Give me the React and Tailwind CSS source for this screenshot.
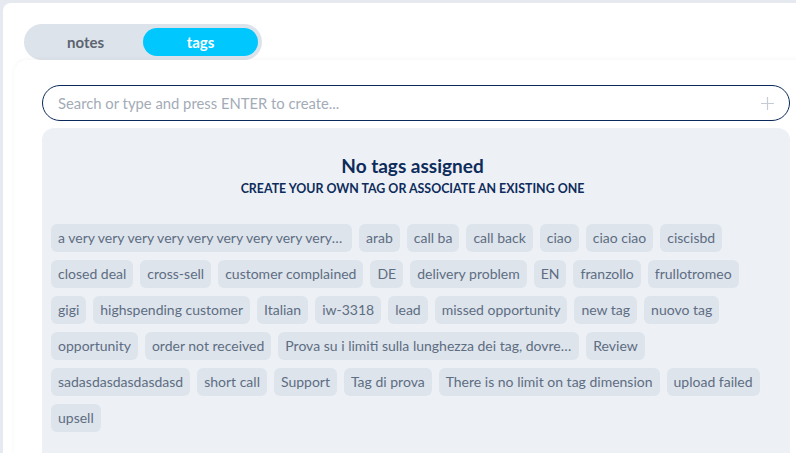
import React, { useState } from 'react';

const tags = [
  'a very very very very very very very very very very very very long tag',
  'arab',
  'call ba',
  'call back',
  'ciao',
  'ciao ciao',
  'ciscisbd',
  'closed deal',
  'cross-sell',
  'customer complained',
  'DE',
  'delivery problem',
  'EN',
  'franzollo',
  'frullotromeo',
  'gigi',
  'highspending customer',
  'Italian',
  'iw-3318',
  'lead',
  'missed opportunity',
  'new tag',
  'nuovo tag',
  'opportunity',
  'order not received',
  'Prova su i limiti sulla lunghezza dei tag, dovrebbe essere troncato',
  'Review',
  'sadasdasdasdasdasd',
  'short call',
  'Support',
  'Tag di prova',
  'There is no limit on tag dimension',
  'upload failed',
  'upsell'
];

const App = () => {
  const [tab, setTab] = useState('tags');
  const [query, setQuery] = useState('');

  return (
    <div className="w-[796px] h-[453px] overflow-hidden bg-[#e6eaf0] pl-[3px] pt-[3px] font-['Lato',sans-serif]">
      <div className="w-[800px] h-[460px] bg-white rounded-tl-[8px] pl-[21px] pt-[21px]">
        <div className="flex w-[238px] h-[36px] items-center rounded-full bg-[#dde3ea] p-[4px]">
          <button
            onClick={() => setTab('notes')}
            className={`flex-1 h-full rounded-full text-[15px] font-bold ${tab === 'notes' ? 'bg-[#00c8ff] text-white' : 'text-[#5c6470]'}`}
          >
            notes
          </button>
          <button
            onClick={() => setTab('tags')}
            className={`flex-1 h-full rounded-full text-[15px] font-bold ${tab === 'tags' ? 'bg-[#00c8ff] text-white' : 'text-[#5c6470]'}`}
          >
            tags
          </button>
        </div>

        <div className="-ml-[10px] rounded-tl-[14px] shadow-[0_-1px_4px_rgba(0,0,0,0.04)] pl-[28px] pt-[25px]">
          <div className="flex w-[748px] h-[36px] items-center rounded-full border border-[#0b2a5b] bg-white pl-[15px] pr-[14px]">
            <input
              value={query}
              onChange={e => setQuery(e.target.value)}
              placeholder="Search or type and press ENTER to create..."
              className="flex-1 bg-transparent text-[14.8px] text-[#33415a] placeholder-[#a3abb7] outline-none font-['Lato',sans-serif]"
            />
            <svg width="15" height="15" viewBox="0 0 15 15" className="text-[#c5ccd6]">
              <path d="M7.5 1v13M1 7.5h13" stroke="currentColor" strokeWidth="1.2" />
            </svg>
          </div>

          <div className="mt-[7px] w-[748px] h-[340px] rounded-t-[12px] bg-[#edf1f5] pl-[9px] pr-[16px] pt-[26px]">
            <h2 className="text-center text-[19px] font-bold leading-[24px] text-[#0d2b5b]">No tags assigned</h2>
            <p className="mt-[3px] text-center text-[12.4px] font-bold leading-[16px] text-[#0d2b5b]">
              CREATE YOUR OWN TAG OR ASSOCIATE AN EXISTING ONE
            </p>
            <div className="mt-[27px] flex flex-wrap gap-x-[7px] gap-y-[8px]">
              {tags.map(tag => (
                <span
                  key={tag}
                  className="h-[28px] max-w-[301px] truncate rounded-[6px] bg-[#dde4ec] px-[7px] text-[14px] leading-[28px] text-[#5d6d82]"
                >
                  {tag}
                </span>
              ))}
            </div>
          </div>
        </div>
      </div>
    </div>
  );
};

export default App;
